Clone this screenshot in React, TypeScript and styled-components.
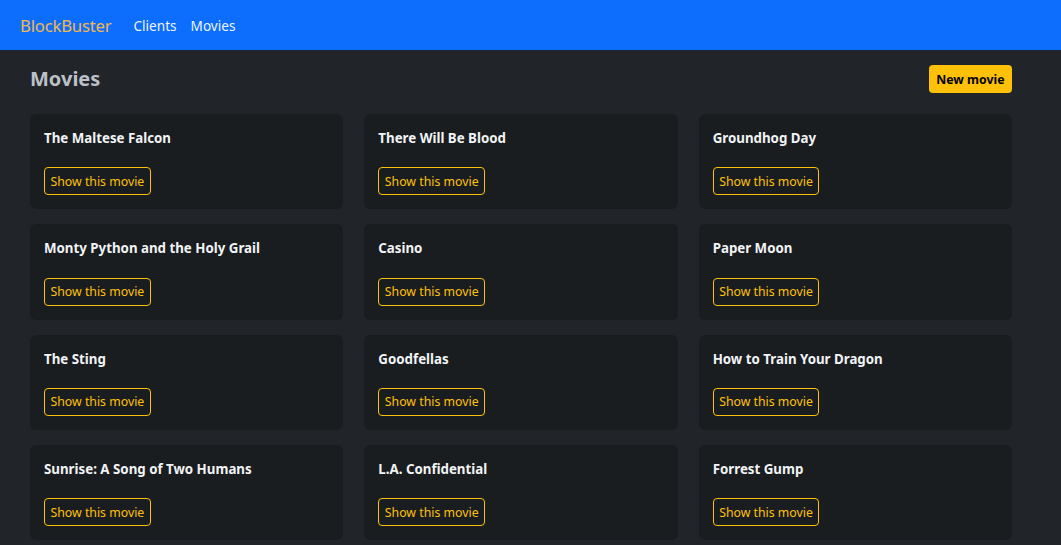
import React from "react";
import styled, { createGlobalStyle } from "styled-components";

const Global = createGlobalStyle`
  html, body { margin: 0; padding: 0; background: #212529; }
  body { font-family: "Noto Sans", "Open Sans", sans-serif; color: #dee2e6; }
  * { box-sizing: border-box; }
`;

const Navbar = styled.nav`
  height: 50px;
  background: #0d6efd;
  display: flex;
  align-items: center;
  padding: 0 20px;
  gap: 22px;
`;

const Brand = styled.a`
  font-size: 16.7px;
  color: #f2b84b;
  text-decoration: none;
  letter-spacing: -0.2px;
`;

const NavLinks = styled.div`
  display: flex;
  gap: 14px;
`;

const NavLink = styled.a`
  font-size: 13.6px;
  color: rgba(255, 255, 255, 0.95);
  text-decoration: none;
`;

const Main = styled.main`
  width: 982px;
  margin-left: 30px;
  padding-top: 15px;
`;

const Header = styled.div`
  display: flex;
  justify-content: space-between;
  align-items: center;
  height: 28px;
  margin-bottom: 21px;
`;

const Title = styled.h1`
  margin: 0 0 2px;
  font-size: 20px;
  font-weight: 700;
  color: #bcc1c8;
`;

const PrimaryButton = styled.button`
  height: 28px;
  padding: 0 7.5px;
  border: none;
  border-radius: 4px;
  background: #ffc107;
  color: #000;
  font-family: inherit;
  font-weight: 700;
  font-size: 12.3px;
`;

const Grid = styled.div`
  display: grid;
  grid-template-columns: repeat(3, 1fr);
  column-gap: 21px;
  row-gap: 15px;
`;

const Card = styled.div`
  background: #1a1d20;
  border-radius: 6px;
  padding: 14px;
  display: flex;
  flex-direction: column;
  align-items: flex-start;
  gap: 19.3px;
  height: 95.3px;
`;

const CardTitle = styled.h5`
  margin: 0;
  font-size: 13.3px;
  line-height: 20px;
  font-weight: 700;
  color: #f1f3f5;
`;

const OutlineButton = styled.button`
  height: 28px;
  padding: 0 5.5px;
  border: 1px solid #ffc107;
  border-radius: 4px;
  background: transparent;
  color: #ffc107;
  font-family: inherit;
  font-size: 12.3px;
`;

const movies = [
  "The Maltese Falcon",
  "There Will Be Blood",
  "Groundhog Day",
  "Monty Python and the Holy Grail",
  "Casino",
  "Paper Moon",
  "The Sting",
  "Goodfellas",
  "How to Train Your Dragon",
  "Sunrise: A Song of Two Humans",
  "L.A. Confidential",
  "Forrest Gump",
];

export default function App() {
  return (
    <>
      <Global />
      <Navbar>
        <Brand href="#">BlockBuster</Brand>
        <NavLinks>
          <NavLink href="#">Clients</NavLink>
          <NavLink href="#">Movies</NavLink>
        </NavLinks>
      </Navbar>
      <Main>
        <Header>
          <Title>Movies</Title>
          <PrimaryButton>New movie</PrimaryButton>
        </Header>
        <Grid>
          {movies.map((m) => (
            <Card key={m}>
              <CardTitle>{m}</CardTitle>
              <OutlineButton>Show this movie</OutlineButton>
            </Card>
          ))}
        </Grid>
      </Main>
    </>
  );
}
